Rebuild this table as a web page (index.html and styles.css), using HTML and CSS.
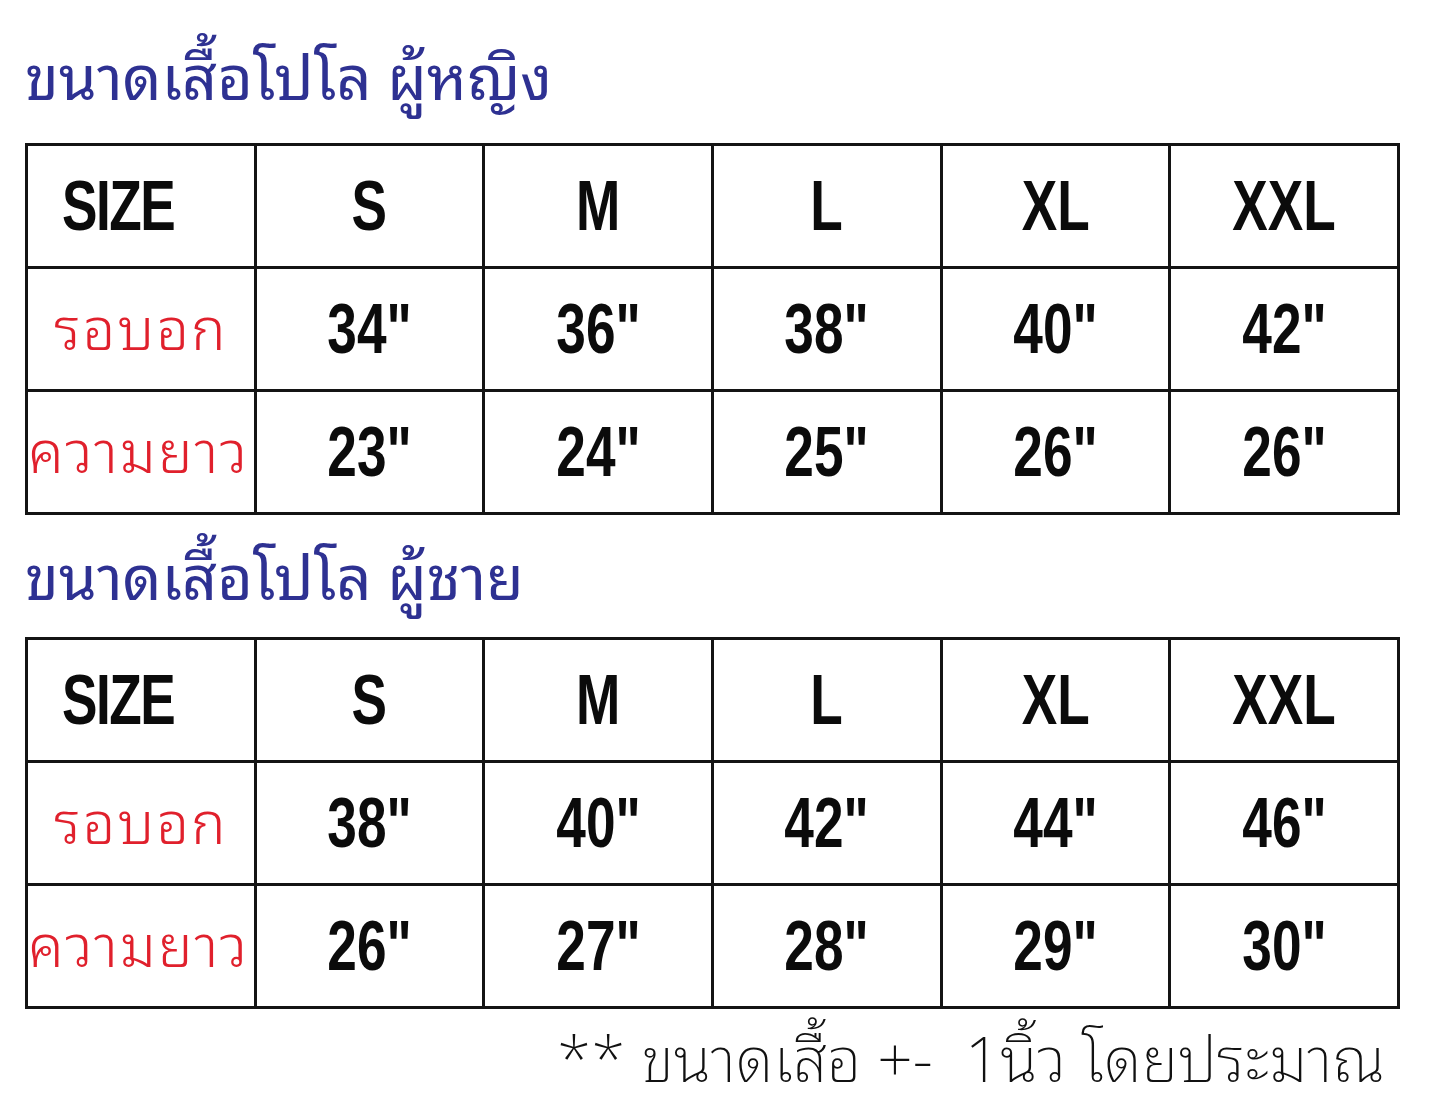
FILE: index.html
```html
<!DOCTYPE html>
<html lang="th">
<head>
<meta charset="utf-8">
<title>ขนาดเสื้อโปโล</title>
<link rel="stylesheet" href="styles.css">
</head>
<body>
<main class="page">
  <h1 class="title title-first">ขนาดเสื้อโปโล ผู้หญิง</h1>
  <table class="chart">
    <tr>
      <td class="head"><span class="num">SIZE</span></td>
      <td><span class="num">S</span></td>
      <td><span class="num">M</span></td>
      <td><span class="num">L</span></td>
      <td><span class="num">XL</span></td>
      <td><span class="num">XXL</span></td>
    </tr>
    <tr>
      <td class="label label-chest">รอบอก</td>
      <td><span class="num">34"</span></td>
      <td><span class="num">36"</span></td>
      <td><span class="num">38"</span></td>
      <td><span class="num">40"</span></td>
      <td><span class="num">42"</span></td>
    </tr>
    <tr>
      <td class="label label-length">ความยาว</td>
      <td><span class="num">23"</span></td>
      <td><span class="num">24"</span></td>
      <td><span class="num">25"</span></td>
      <td><span class="num">26"</span></td>
      <td><span class="num">26"</span></td>
    </tr>
  </table>

  <h1 class="title title-second">ขนาดเสื้อโปโล ผู้ชาย</h1>
  <table class="chart">
    <tr>
      <td class="head"><span class="num">SIZE</span></td>
      <td><span class="num">S</span></td>
      <td><span class="num">M</span></td>
      <td><span class="num">L</span></td>
      <td><span class="num">XL</span></td>
      <td><span class="num">XXL</span></td>
    </tr>
    <tr>
      <td class="label label-chest">รอบอก</td>
      <td><span class="num">38"</span></td>
      <td><span class="num">40"</span></td>
      <td><span class="num">42"</span></td>
      <td><span class="num">44"</span></td>
      <td><span class="num">46"</span></td>
    </tr>
    <tr>
      <td class="label label-length">ความยาว</td>
      <td><span class="num">26"</span></td>
      <td><span class="num">27"</span></td>
      <td><span class="num">28"</span></td>
      <td><span class="num">29"</span></td>
      <td><span class="num">30"</span></td>
    </tr>
  </table>

  <p class="note">** ขนาดเสื้อ +-&nbsp; 1นิ้ว โดยประมาณ</p>
</main>
</body>
</html>
```

FILE: styles.css
```css
html, body {
  margin: 0;
  padding: 0;
  background: #ffffff;
}

.page {
  width: 1375px;
  padding-left: 25px;
  font-family: "Noto Sans Thai Looped", "Loma", "Garuda", "Kinnari", "Noto Serif Thai", "Noto Sans Thai", "Noto Sans", "DejaVu Sans", sans-serif;
}

.title {
  margin: 0;
  font-weight: 400;
  color: #2e3192;
  font-size: 61px;
  line-height: 1;
  white-space: nowrap;
}

.title-first {
  height: 143px;
  box-sizing: border-box;
  padding-top: 42px;
}

.title-second {
  height: 122px;
  box-sizing: border-box;
  padding-top: 27px;
}

.chart {
  border-collapse: collapse;
  width: 1375px;
  table-layout: fixed;
}

.chart td {
  border: 3px solid #141414;
  height: 120px;
  padding: 0;
  text-align: center;
  vertical-align: middle;
}

.num {
  display: inline-block;
  font-family: "Liberation Sans", Arial, sans-serif;
  font-weight: bold;
  font-size: 70px;
  line-height: 1;
  color: #0b0b0b;
  transform: scaleX(0.76);
}

.chart .head {
  text-align: left;
}

.head .num {
  transform-origin: left center;
  margin-left: 34px;
  letter-spacing: -2px;
}

.chart .label {
  color: #e0202c;
  font-size: 58px;
  font-weight: 300;
  line-height: 1;
  letter-spacing: 2px;
  white-space: nowrap;
  overflow: visible;
  box-sizing: border-box;
  padding-bottom: 11px;
}

.chart .label-length {
  text-align: left;
}

.note {
  margin: 0;
  padding: 14px 15px 0 0;
  text-align: right;
  font-size: 62px;
  line-height: 1;
  font-weight: 200;
  color: #111;
  white-space: nowrap;
}
```
